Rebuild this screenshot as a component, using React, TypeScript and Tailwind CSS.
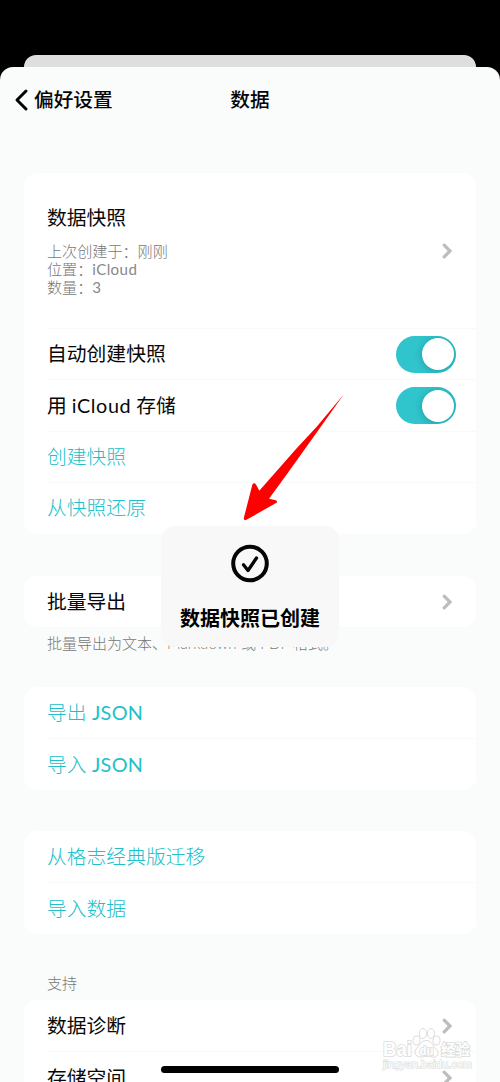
import type { ReactNode } from "react";

function Chevron() {
  return (
    <svg width="11" height="16" viewBox="0 0 11 16" fill="none" className="mr-[23px] shrink-0">
      <path d="M2.2 2.2 8 8 2.2 13.8" stroke="#bdbdbd" strokeWidth="3.2" strokeLinecap="round" />
    </svg>
  );
}

function Toggle() {
  return (
    <span className="mr-[20.500px] flex h-[37px] w-[59.500px] shrink-0 items-center justify-end overflow-hidden rounded-full bg-[#30c4cc] pr-[2px]">
      <span className="h-[32px] w-[32px] rounded-full bg-white shadow-[0_1px_6px_1px_rgba(0,70,80,0.25)]" />
    </span>
  );
}

function Card({ children, className = "" }: { children: ReactNode; className?: string }) {
  return <section className={`mx-[24px] shrink-0 rounded-[13px] bg-white pl-[23px] ${className}`}>{children}</section>;
}

type RowProps = { label: ReactNode; accent?: boolean; line?: boolean; end?: ReactNode };

function Row({ label, accent, line, end }: RowProps) {
  return (
    <div className={`flex h-[51.4px] items-center justify-between ${line ? "border-t border-[#f8f9f9]" : ""}`}>
      <span className={`text-[19.8px] leading-none whitespace-nowrap ${accent ? "font-light text-[#20c0ca]" : "text-[#080808]"}`}>
        {label}
      </span>
      {end}
    </div>
  );
}

function Arrow() {
  return (
    <svg width="104" height="129" viewBox="0 0 104 129" className="absolute top-[393px] left-[242px]">
      <path
        d="M101.9 1.2 74.700 33.700 54.700 55.300 17.300 97.700 14 91.500Q12 88.800 10.400 91.500L1.800 125Q1.700 127.800 4.500 126.800L34 110Q36.300 108.500 33.800 107.300L27 105.700 46.300 79.300 71.300 44.300Z"
        fill="#ff0000"
      />
    </svg>
  );
}

function Toast() {
  return (
    <div className="absolute top-[526px] left-[161px] flex h-[121px] w-[178px] flex-col items-center rounded-[14px] bg-[#f8f8f8] pt-[18px]">
      <svg width="40" height="40" viewBox="0 0 40 40" fill="none" stroke="#050505">
        <circle cx="20" cy="19.5" r="16.8" strokeWidth="4" />
        <path d="m13.500 20.800 4.500 5.700L26.500 14" strokeWidth="3.300" strokeLinecap="round" strokeLinejoin="round" />
      </svg>
      <span className="mt-[24px] text-[20px] leading-[20px] font-bold whitespace-nowrap text-black">数据快照已创建</span>
    </div>
  );
}

function Watermark() {
  return (
    <svg width="100" height="50" viewBox="0 0 100 50" className="absolute top-[1025px] left-[380px]" fill="#fff" stroke="#dadbdb" strokeWidth="1">
      <ellipse cx="36.500" cy="15.500" rx="3.500" ry="4.500" />
      <ellipse cx="43" cy="8.500" rx="3.600" ry="5" />
      <ellipse cx="51" cy="8.500" rx="3.500" ry="5" />
      <ellipse cx="56.500" cy="15.500" rx="3.500" ry="4.500" />
      <path d="M46 15.500C41 16 40 20 37 23C32 28 37 33 42 32C46 31 48 31 52 32C58 33 60 28 56 24C52 20 52 16 46 15.500Z" />
      <g strokeWidth="1.6" paintOrder="stroke" fontWeight="700" fontFamily="Liberation Sans, sans-serif">
        <text x="3" y="30.5" textLength="29" lengthAdjust="spacingAndGlyphs" fontSize="19.5">Bai</text>
        <text x="39.5" y="29.5" textLength="14" lengthAdjust="spacingAndGlyphs" fontSize="12.5">du</text>
        <text x="61" y="30" textLength="29" lengthAdjust="spacingAndGlyphs" fontSize="14.5" fontFamily="Noto Sans CJK SC, sans-serif">经验</text>
        <text x="3" y="42.5" textLength="89" lengthAdjust="spacingAndGlyphs" fontSize="10.5" fontWeight="400" strokeWidth="1.1">jingyan.baidu.com</text>
      </g>
    </svg>
  );
}

export default function App() {
  return (
    <div className="relative h-[1082px] w-[500px] overflow-hidden bg-black pt-[55px] font-[Lato,'Noto_Sans_CJK_SC',sans-serif]">
      <div className="mx-[24px] h-[12px] rounded-t-[12px] bg-[#dedede]" />
      <main className="flex h-[1020px] flex-col rounded-t-[13px] bg-[#fafcfb]">
        <header className="grid h-[106px] shrink-0 grid-cols-[1fr_auto_1fr] items-start pt-[21px] text-[19.7px] leading-[20px] font-medium text-[#050505]">
          <div className="flex items-center">
            <svg width="15" height="24" viewBox="0 0 15 24" fill="none" className="ml-[14px]">
              <path d="M12 3 3 12l9 9" stroke="#050505" strokeWidth="3" strokeLinecap="round" strokeLinejoin="round" />
            </svg>
            <span className="ml-[5px]">偏好设置</span>
          </div>
          <h1 className="mt-[2px]">数据</h1>
        </header>
        <Card className="h-[361px]">
          <div className="flex h-[155px] items-center justify-between">
            <div>
              <h2 className="text-[19.8px] leading-[24px] text-[#080808]">数据快照</h2>
              <div className="mt-[13px] text-[15.1px] leading-[18.3px] font-light text-[#777]">
                <p>上次创建于：刚刚</p>
                <p>
                  位置：<span className="font-normal tracking-[0.4px] text-[#888]">iCloud</span>
                </p>
                <p>
                  数量：<span className="font-normal text-[#888]">3</span>
                </p>
              </div>
            </div>
            <Chevron />
          </div>
          <Row label="自动创建快照" line end={<Toggle />} />
          <Row
            label={
              <>
                用 <span className="tracking-[0.6px]">iCloud</span> 存储
              </>
            }
            line
            end={<Toggle />}
          />
          <Row label="创建快照" accent line />
          <Row label="从快照还原" accent line />
        </Card>
        <Card className="mt-[42px] h-[51px]">
          <Row label="批量导出" end={<Chevron />} />
        </Card>
        <p className="mt-[6px] ml-[47px] h-[54px] shrink-0 text-[15px] leading-[20px] font-light whitespace-nowrap text-[#777]">
          批量导出为文本、<span className="tracking-[0.1px]">Markdown 或 PDF</span> 格式。
        </p>
        <Card className="h-[103px]">
          <Row label={<>导出 <span className="font-normal tracking-[0.3px]">JSON</span></>} accent />
          <Row label={<>导入 <span className="font-normal tracking-[0.3px]">JSON</span></>} accent line />
        </Card>
        <Card className="mt-[41px] h-[103px]">
          <Row label="从格志经典版迁移" accent />
          <Row label="导入数据" accent line />
        </Card>
        <h3 className="mt-[39px] ml-[47px] h-[27px] shrink-0 text-[15px] leading-[20px] font-light text-[#777]">支持</h3>
        <Card className="h-[103px]">
          <Row label="数据诊断" end={<Chevron />} />
          <Row label="存储空间" line end={<Chevron />} />
        </Card>
      </main>
      <Toast />
      <Arrow />
      <Watermark />
      <div className="absolute top-[1066px] left-[161px] h-[7px] w-[178px] rounded-full bg-black" />
    </div>
  );
}
